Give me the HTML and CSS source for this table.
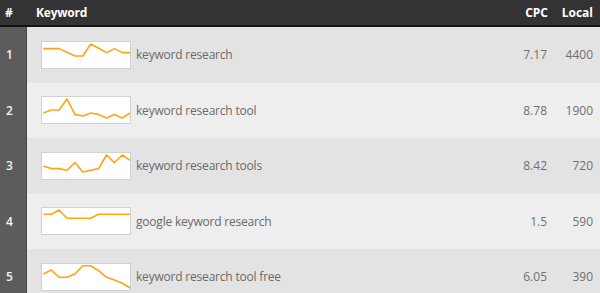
FILE: index.html
```html
<!DOCTYPE html>
<html>
<head>
<meta charset="utf-8">
<link rel="stylesheet" href="styles.css">
</head>
<body>
<div class="table">
  <div class="row head">
    <div class="num">#</div>
    <div class="kw">Keyword</div>
    <div class="cpc">CPC</div>
    <div class="local">Local</div>
  </div>
  <div class="row odd">
    <div class="num">1</div>
    <div class="kw"><span class="spark"><svg viewBox="0 0 88 26" width="88" height="26"><polyline points="1.3,6.6 9.2,6.6 17.1,6.6 25,10.3 32.9,14 40.8,14 48.7,2 56.6,6.3 64.5,10.6 72.4,6.6 80.3,10.6 88.2,10.6"/></svg></span><span class="term">keyword research</span></div>
    <div class="cpc">7.17</div>
    <div class="local">4400</div>
  </div>
  <div class="row even">
    <div class="num">2</div>
    <div class="kw"><span class="spark"><svg viewBox="0 0 88 26" width="88" height="26"><polyline points="1.3,16 9.2,13 17.1,13 25,2 32.9,17.4 40.8,19 48.7,16 56.6,17.4 64.5,21 72.4,17.4 80.3,21 88.2,16"/></svg></span><span class="term">keyword research tool</span></div>
    <div class="cpc">8.78</div>
    <div class="local">1900</div>
  </div>
  <div class="row odd">
    <div class="num">3</div>
    <div class="kw"><span class="spark"><svg viewBox="0 0 88 26" width="88" height="26"><polyline points="1.3,13 9.2,15.6 17.1,15.6 25,17.3 32.9,9.6 40.8,19 48.7,17.3 56.6,15.6 64.5,2 72.4,9.6 80.3,2 88.2,7.3"/></svg></span><span class="term">keyword research tools</span></div>
    <div class="cpc">8.42</div>
    <div class="local">720</div>
  </div>
  <div class="row even">
    <div class="num">4</div>
    <div class="kw"><span class="spark"><svg viewBox="0 0 88 26" width="88" height="26"><polyline points="1.3,6.3 9.2,6.3 17.1,2 25,10.3 32.9,10.3 40.8,10.3 48.7,10.3 56.6,6.3 64.5,6.3 72.4,6.3 80.3,6.3 88.2,6.3"/></svg></span><span class="term">google keyword research</span></div>
    <div class="cpc">1.5</div>
    <div class="local">590</div>
  </div>
  <div class="row odd">
    <div class="num">5</div>
    <div class="kw"><span class="spark"><svg viewBox="0 0 88 26" width="88" height="26"><polyline points="1.3,10 9.2,6 17.1,13.3 25,13.3 32.9,10 40.8,1.7 48.7,1.7 56.6,6.7 64.5,13.3 72.4,16 80.3,19.3 88.2,24"/></svg></span><span class="term">keyword research tool free</span></div>
    <div class="cpc">6.05</div>
    <div class="local">390</div>
  </div>
</div>
</body>
</html>
```
FILE: styles.css
```css
html, body {
  margin: 0;
  padding: 0;
  background: #e3e3e3;
}
body {
  font-family: "Open Sans", "DejaVu Sans", sans-serif;
  font-size: 12px;
  overflow: hidden;
}
.table {
  width: 600px;
}
.row {
  display: grid;
  grid-template-columns: 27px 1fr 70px 52px;
  align-items: stretch;
}
.row > div {
  display: flex;
  align-items: center;
}
.head {
  height: 25px;
  background: #333333;
  border-bottom: 2px solid #141414;
  color: #ffffff;
  font-weight: 700;
}
.head .num {
  padding-left: 5px;
}
.head .kw {
  padding-left: 9px;
  letter-spacing: -0.2px;
}
.row .cpc, .row .local {
  justify-content: flex-end;
}
.row .local {
  padding-right: 7px;
}
.row:not(.head) {
  height: 55.5px;
  color: #707070;
}
.odd {
  background: #e3e3e3;
}
.even {
  background: #eeeeee;
}
.row:not(.head) .num {
  background: #5c5c5c;
  border-right: 1px solid #454545;
  color: #f2f2f2;
  font-weight: 600;
  padding-left: 6px;
}
.row:not(.head) .kw {
  padding-left: 14px;
}
.row:not(.head) .cpc {
  padding-right: 1px;
}
.spark {
  display: block;
  width: 88px;
  height: 26px;
  background: #ffffff;
  border: 1px solid #d2d2d2;
  flex: none;
}
.spark svg {
  display: block;
  overflow: visible;
}
.spark polyline {
  fill: none;
  stroke: #ffa514;
  stroke-width: 1.6;
  stroke-linejoin: round;
}
.term {
  margin-left: 5px;
  color: #6a6a6a;
  letter-spacing: -0.2px;
}
```
